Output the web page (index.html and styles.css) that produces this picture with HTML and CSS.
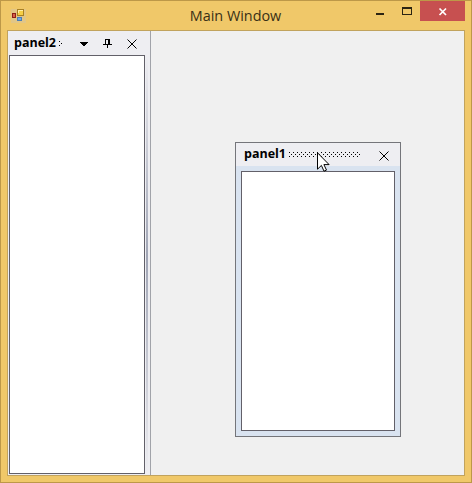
FILE: index.html
```html
<!DOCTYPE html>
<html lang="en">
<head>
<meta charset="utf-8">
<title>Main Window</title>
<link rel="stylesheet" href="styles.css">
</head>
<body>
<div class="window">
  <header class="titlebar">
    <svg class="app-icon" width="15" height="14" viewBox="-1 0 15 14">
      <rect x="-1" width="15" height="14" fill="#d9c49a" opacity=".6"/>
      <rect x=".5" y="4.500" width="3" height="4" fill="#d8604a" stroke="#8e2018"/>
      <rect x="5.500" y=".5" width="6" height="6" fill="#f6cf45" stroke="#a98022"/>
      <path d="M6 1.500h5M6.500 1v3" stroke="#fff0a5"/>
      <rect x="5.500" y="8.500" width="4" height="3" fill="#70a8e4" stroke="#4b7eb5"/>
    </svg>
    <h1 class="title">Main Window</h1>
    <div class="controls">
      <svg width="52" height="20" viewBox="0 0 52 20" shape-rendering="crispEdges">
        <path d="M8 13h8v2H8z" fill="#2c2412"/>
        <path d="M34 7h10v8H34zM35 9v5h8V9z" fill="#2c2412" fill-rule="evenodd"/>
      </svg>
      <div class="close">
        <svg width="45" height="20" viewBox="0 0 45 20"><path d="M19.500 8.500l6.500 6.500M26 8.500l-6.500 6.500" stroke="#fff" stroke-width="1.700"/></svg>
      </div>
    </div>
  </header>
  <main class="client">
    <section class="docked">
      <div class="caption">
        <svg width="137" height="24" viewBox="0 0 137 24">
          <text class="name" x="5" y="16" textLength="42" lengthAdjust="spacingAndGlyphs">panel2</text>
          <g shape-rendering="crispEdges">
            <path d="M50 10h1v1h-1zM52 12h1v1h-1zM50 14h1v1h-1z"/>
            <path d="M71 11h8v1h-8zM72 12h6v1h-6zM73 13h4v1h-4zM74 14h2v1h-2z"/>
            <path d="M96 8h5v5h2v1h-4v3h-1v-3h-4v-1h2zM97 9v4h2V9z" fill-rule="evenodd"/>
          </g>
          <path d="M118.500 8.500l9 9M127.500 8.500l-9 9" stroke="#000"/>
        </svg>
      </div>
      <div class="docked-main">
        <div class="docked-body"></div>
        <div class="splitter"></div>
      </div>
    </section>
    <div class="workspace"></div>
  </main>
</div>
<section class="floating">
  <div class="caption">
    <svg width="164" height="23" viewBox="0 0 164 23">
      <defs>
        <pattern id="grip" x="53" y="9" width="4" height="4" patternUnits="userSpaceOnUse">
          <path d="M0 0h1v1H0zM2 2h1v1H2z" shape-rendering="crispEdges"/>
        </pattern>
      </defs>
      <text class="name" x="8" y="15" textLength="42" lengthAdjust="spacingAndGlyphs">panel1</text>
      <rect x="53" y="9" width="72" height="5" fill="url(#grip)"/>
      <path d="M143.500 8.500l9 9M152.500 8.500l-9 9" stroke="#000"/>
    </svg>
  </div>
  <div class="floating-body"></div>
</section>
<svg class="cursor" width="13" height="21" viewBox="0 0 13 21"><path d="M.5.8v16.400l3.900-3.800 2.600 5.800 2.500-1.100-2.600-5.500h5.200z" fill="#fff" stroke="#000"/></svg>
</body>
</html>
```
FILE: styles.css
```css
* { box-sizing: border-box; }
body { margin: 0; overflow: hidden; font-family: "Open Sans", "Noto Sans", sans-serif; }
svg { display: block; }
.window {
  display: grid;
  grid-template-rows: 29px 1fr;
  width: 472px;
  height: 483px;
  padding: 0 6px 6px;
  border: 1px solid #bd9848;
  background: #f0c869;
}
.titlebar { display: grid; grid-template-columns: 72px 1fr 97px; margin-right: -1px; }
.app-icon { margin: 8px 0 0 4px; }
.title {
  margin: 5px 0 0;
  padding-left: 23px;
  font-size: 14.4px;
  font-weight: 400;
  line-height: 20px;
  text-align: center;
  white-space: nowrap;
  color: #393016;
}
.controls { display: flex; margin-left: -1px; }
.close { width: 45px; height: 20px; background: #c75050; }
.controls svg { margin-top: -1px; }
.client { display: flex; border: 1px solid #c1a35d; background: #f0f0f0; }
.docked {
  display: flex;
  flex-direction: column;
  width: 143px;
  padding: 0 0 1px 1px;
  border-right: 1px solid #a1a3a9;
  background: #eeeef2;
}
.caption { flex: none; background: #eeeef2; }
.name { font-size: 12px; font-weight: 700; }
.docked-main { display: flex; flex: 1; }
.docked-body { width: 136px; border: 1px solid #626069; background: #fff; }
.splitter { width: 2px; margin-left: 1px; background: linear-gradient(#eeeef2, #a0a5b5 48%, #eeeef2); }
.workspace { flex: 1; }
.floating {
  position: absolute;
  left: 235px;
  top: 142px;
  display: flex;
  flex-direction: column;
  width: 166px;
  height: 295px;
  border: 1px solid #74757a;
  background: #d9e3f0;
}
.floating-body { flex: 1; margin: 5px 5px 5px 5px; border: 1px solid #626069; background: #fff; }
.cursor { position: absolute; left: 317px; top: 152px; }
```
